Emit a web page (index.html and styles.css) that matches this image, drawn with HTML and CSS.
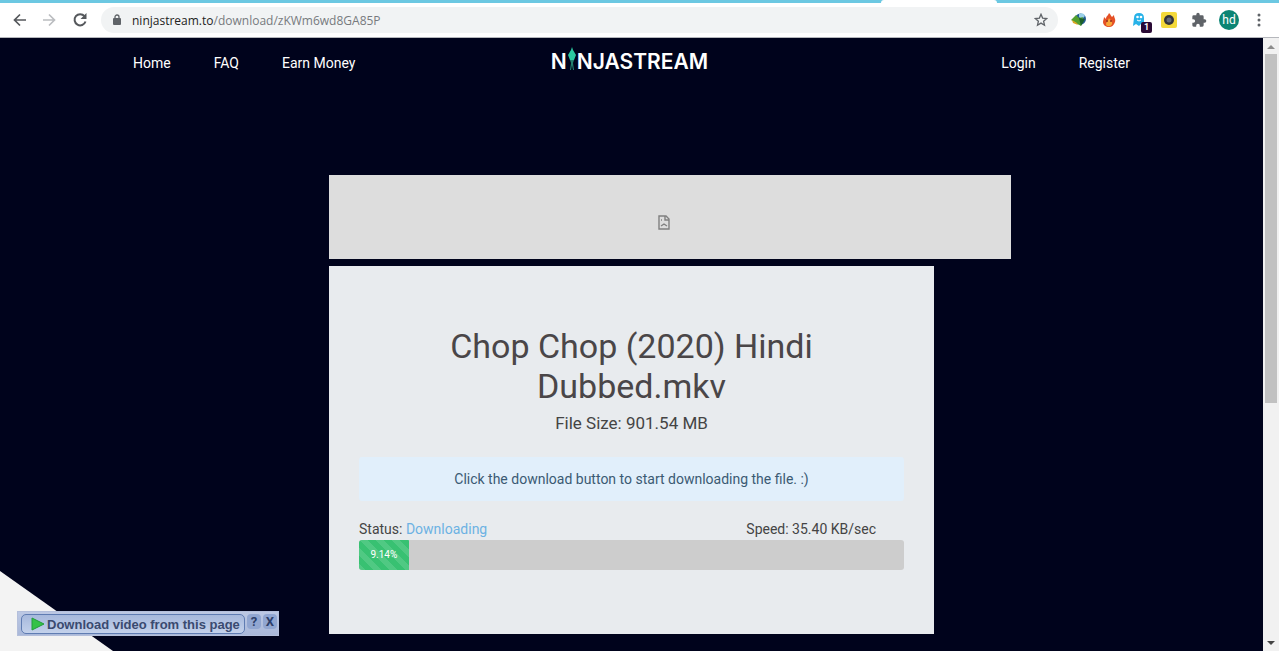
FILE: index.html
```html
<!DOCTYPE html>
<html lang="en">
<head>
  <meta charset="UTF-8">
  <meta name="viewport" content="width=device-width, initial-scale=1.0">
  <title>NinjaStream - Download</title>
  <link rel="stylesheet" href="styles.css">
</head>
<body>

<div class="tab-strip"><div class="active-tab"></div></div>

<div class="toolbar">
  <button class="tool" aria-label="Back">
    <svg width="16" height="16" viewBox="0 0 16 16" fill="none" stroke="#55585c" stroke-width="1.700"><path d="M14 8H3M8 2.500L2.500 8l5.500 5.500"/></svg>
  </button>
  <button class="tool" aria-label="Forward">
    <svg width="16" height="16" viewBox="0 0 16 16" fill="none" stroke="#bbbdc0" stroke-width="1.700"><path d="M1 8h11M7 2.500L12.500 8 7 13.500"/></svg>
  </button>
  <button class="tool" aria-label="Reload">
    <svg width="16" height="16" viewBox="0 0 16 16"><path d="M12.5 4.2A5.6 5.6 0 1 0 13.5 9.5" fill="none" stroke="#55585c" stroke-width="2"/><path d="M14.5 1v6h-6z" fill="#55585c"/></svg>
  </button>
  <div class="address-bar">
    <svg width="10" height="12" viewBox="0 0 10 12"><rect x="1" y="4" width="8" height="7" rx="1" fill="#5f6368"/><path d="M3 5V3a2 2 0 0 1 4 0v2" fill="none" stroke="#5f6368" stroke-width="1.3"/></svg>
    <div class="url" role="textbox" aria-label="Address"><span class="host">ninjastream.to</span>/download/zKWm6wd8GA85P</div>
    <button class="star" aria-label="Bookmark this page">
      <svg width="14" height="14" viewBox="0 0 14 14" fill="none" stroke="#5f6368" stroke-width="1.3"><path d="M7 1.3l1.6 3.8 4.1.4-3.1 2.7.9 4L7 10.1l-3.5 2.1.9-4L1.3 5.5l4.1-.4z"/></svg>
    </button>
  </div>
  <div class="extensions">
    <button class="ext" aria-label="Download manager">
      <svg width="16" height="16" viewBox="0 0 16 16"><circle cx="9.500" cy="7" r="5.500" fill="#245c94"/><path d="M8 2q5-2 6 2l-3 3-3-2z" fill="#9ad0e8"/><path d="M0 8l5-5 3 3 4-1-2 9-5-3z" fill="#52a02f"/><path d="M1 8l5 3 1 2-5-2z" fill="#d9a520"/><path d="M8 6l6 1-4 7z" fill="#1c602a"/></svg>
    </button>
    <button class="ext" aria-label="Flame">
      <svg width="16" height="16" viewBox="0 0 16 16"><path d="M8 1c2 2 2 3 3 4l2-2c0 3 2 4 1 7-1 3-3 5-6 5s-6-2-6-5c0-2 1-3 1-5l2 2c0-3 2-3 3-6z" fill="#e45025"/><path d="M8 6c1 2 4 3 3 6-1 3-6 3-6 0 0-2 2-3 3-6z" fill="#f6a638"/><circle cx="6" cy="9" r="1" fill="#96301b"/><circle cx="10" cy="9" r="1" fill="#96301b"/></svg>
    </button>
    <button class="ext" aria-label="Ghost blocker, 1 blocked">
      <svg width="16" height="16" viewBox="0 0 16 16"><path d="M2 14l1-8q0-5 5-5t5 5v7l-3-1-2 2-3-2z" fill="#27b2e8"/><circle cx="6.500" cy="5" r="1.300" fill="#fff"/><circle cx="10" cy="5" r="1.300" fill="#fff"/><path d="M6 8q2 2 4 0" stroke="#fff" fill="none"/></svg>
      <span class="badge">1</span>
    </button>
    <button class="ext" aria-label="Camera">
      <svg width="16" height="16" viewBox="0 0 16 16"><rect x="0" y="0" width="16" height="16" rx="2" fill="#f4d93a"/><circle cx="8" cy="8" r="5" fill="#34343c"/><circle cx="8" cy="8" r="2.500" fill="#626979"/></svg>
    </button>
    <button class="ext" aria-label="Extensions">
      <svg width="16" height="16" viewBox="0 0 24 24"><path d="M20.500 11H19V7a2 2 0 0 0-2-2h-4V3.500a2.500 2.500 0 0 0-5 0V5H4a2 2 0 0 0-2 2v3.800h1.500a2.700 2.700 0 0 1 0 5.400H2V20a2 2 0 0 0 2 2h3.800v-1.500a2.700 2.700 0 0 1 5.400 0V22H17a2 2 0 0 0 2-2v-4h1.500a2.500 2.500 0 0 0 0-5z" fill="#5f6368"/></svg>
    </button>
    <button class="ext avatar">hd</button>
    <button class="ext" aria-label="Menu">
      <svg width="16" height="16" viewBox="0 0 16 16" fill="#5f6368"><circle cx="8" cy="3" r="1.500"/><circle cx="8" cy="8" r="1.500"/><circle cx="8" cy="13" r="1.500"/></svg>
    </button>
  </div>
</div>

<div class="window">
  <div class="site">
    <header class="navbar">
      <nav class="links">
        <a href="#">Home</a>
        <a href="#">FAQ</a>
        <a href="#">Earn Money</a>
      </nav>
      <a class="logo" href="#" aria-label="NinjaStream">
        <span>N</span>
        <svg width="8" height="24" viewBox="0 0 8 24"><path d="M4 0l1 3 3 5-2 5H2L0 8l3-5z" fill="#2bc9a0"/><path d="M2 13h4l-1 3 1 7H5l-1-5-1 5H2l1-7z" fill="#23806f"/></svg>
        <span>NJASTREAM</span>
      </a>
      <nav class="links right">
        <a href="#">Login</a>
        <a href="#">Register</a>
      </nav>
    </header>

    <main class="content">
      <div class="ad">
        <svg width="12" height="15" viewBox="0 0 12 15" fill="none" stroke="#808080" stroke-width="1.400"><path d="M1 1h7l3 3v10H1z"/><path d="M7 1v4h4M3 11l3-2 3 2"/><path d="M3 5h1"/></svg>
      </div>
      <div class="card">
        <h1>Chop Chop (2020) Hindi Dubbed.mkv</h1>
        <p class="size">File Size: 901.54 MB</p>
        <div class="alert">Click the download button to start downloading the file. :)</div>
        <div class="status">
          <span>Status: <span class="state">Downloading</span></span>
          <span class="speed">Speed: 35.40 KB/sec</span>
        </div>
        <div class="progress" role="progressbar" aria-label="Download progress" aria-valuenow="9.14" aria-valuemin="0" aria-valuemax="100">
          <div class="bar" style="width: 9.14%">9.14%</div>
        </div>
      </div>
    </main>

    <div class="grabber">
      <button class="grab">
        <svg width="14" height="14" viewBox="0 0 14 14"><path d="M1 1l12 6-12 6z" fill="#35c247" stroke="#229c3c"/></svg>
        Download video from this page
      </button>
      <button class="mini">?</button>
      <button class="mini">X</button>
    </div>
  </div>

  <div class="scrollbar">
    <svg width="8" height="5" viewBox="0 0 8 5"><path d="M0 5l4-4 4 4z" fill="#8c8c8c"/></svg>
    <div class="track"><div class="thumb"></div></div>
    <svg width="8" height="5" viewBox="0 0 8 5"><path d="M0 0l4 4 4-4z" fill="#444"/></svg>
  </div>
</div>

</body>
</html>
```
FILE: styles.css
```css
* {
  box-sizing: border-box;
}
body {
  margin: 0;
  height: 100vh;
  display: flex;
  flex-direction: column;
  overflow: hidden;
  font-family: Roboto, Arial, sans-serif;
  font-size: 14px;
}
button {
  padding: 0;
  border: 0;
  background: none;
  font-family: inherit;
}
a {
  color: #fff;
  text-decoration: none;
}
svg {
  display: block;
  flex: none;
}

/* browser bar */
.tab-strip {
  height: 3px;
  flex: none;
  background-color: #6cc8e2;
}
.active-tab {
  width: 116px;
  height: 3px;
  margin-left: auto;
  margin-right: 282px;
  background-color: #fff;
  border-radius: 3px 3px 0 0;
}
.toolbar {
  display: flex;
  align-items: center;
  flex: none;
  height: 35px;
  padding: 0 12px;
  background-color: #fff;
  border-bottom: 1px solid #b5b7bc;
}
.tool {
  margin-right: 14px;
}
.tool:nth-child(3) {
  margin-right: 13px;
}
.address-bar {
  display: flex;
  align-items: center;
  flex: 1;
  height: 26px;
  padding: 0 10px 0 11px;
  border-radius: 13px;
  background-color: #f1f3f4;
}
.url {
  flex: 1;
  margin-left: 10px;
  color: #777a7e;
  font-family: "Open Sans", sans-serif;
  font-size: 12px;
}
.host {
  color: #222;
}
.extensions {
  display: flex;
  align-items: center;
  gap: 14px;
  margin-left: 13px;
}
.ext {
  position: relative;
}
.badge {
  position: absolute;
  right: -5px;
  bottom: -5px;
  width: 11px;
  height: 11px;
  border-radius: 2px;
  background-color: #2a0a35;
  color: #fff;
  font-size: 9px;
  font-weight: bold;
  line-height: 11px;
}
.avatar {
  width: 20px;
  height: 20px;
  margin: 0 -2px;
  border-radius: 50%;
  background-color: #0b8574;
  color: #fff;
  font-size: 12px;
}

/* page */
.window {
  display: flex;
  flex: 1;
  min-height: 0;
}
.site {
  position: relative;
  flex: 1;
  overflow: hidden;
  background-color: #00031c;
}
.site::before {
  content: "";
  position: absolute;
  left: 0;
  bottom: 0;
  width: 113px;
  height: 80px;
  background-color: #f3f3f3;
  clip-path: polygon(0 0, 100% 100%, 0 100%);
}
.navbar {
  display: grid;
  grid-template-columns: 1fr auto 1fr;
  align-items: center;
  max-width: 997px;
  height: 50px;
  margin: 0 auto;
}
.links {
  display: flex;
  gap: 43px;
}
.right {
  justify-content: flex-end;
}
.logo {
  display: flex;
  align-items: center;
  gap: 1px;
  padding: 0 4px 3px 0;
  font-family: Inter, Roboto, sans-serif;
  font-size: 21px;
  font-weight: 600;
  line-height: 24px;
}
.logo svg {
  margin-bottom: 5px;
}
.content {
  width: 605px;
  margin: 87px auto 0;
}
.ad {
  display: flex;
  align-items: center;
  justify-content: center;
  width: 682px;
  height: 84px;
  padding: 10px 12px 0 0;
  margin-bottom: 7px;
  background-color: #ddd;
}
.card {
  padding: 60px 30px 64px;
  background-color: #e8ebee;
  color: #444;
  text-align: center;
}
h1 {
  margin: 0 60px;
  color: #4a4648;
  font-size: 34px;
  font-weight: normal;
  line-height: 40px;
}
.size {
  margin: 6px 0 23px;
  font-size: 17px;
  line-height: 22px;
}
.alert {
  padding: 12px;
  border-radius: 3px;
  background-color: #e1effb;
  color: #3b5a73;
  line-height: 20px;
}
.status {
  display: flex;
  justify-content: space-between;
  margin-top: 18px;
  padding-right: 28px;
  line-height: 20px;
}
.state {
  color: #6cb2e3;
}
.progress {
  height: 30px;
  margin-top: 1px;
  border-radius: 3px;
  background-color: #cdcdcd;
  overflow: hidden;
}
.bar {
  height: 30px;
  background-color: #38c172;
  background-image: linear-gradient(45deg, rgba(255, 255, 255, 0.12) 25%, transparent 25%, transparent 50%, rgba(255, 255, 255, 0.12) 50%, rgba(255, 255, 255, 0.12) 75%, transparent 75%);
  background-size: 16px 16px;
  color: #fff;
  font-size: 10px;
  line-height: 29px;
}

/* floating download panel */
.grabber {
  position: absolute;
  left: 17px;
  bottom: 15px;
  display: flex;
  align-items: flex-start;
  gap: 2px;
  width: 262px;
  height: 25px;
  padding: 2px 1px 2px 3px;
  border: 1px solid #b4bfdb;
  background: linear-gradient(#bcc8e4, #a9b8d9);
}
.grab {
  display: flex;
  align-items: center;
  flex: 1;
  gap: 2px;
  height: 20px;
  padding: 0 0 0 9px;
  border: 1px solid #5f7cb2;
  border-radius: 5px;
  background: linear-gradient(#a6b8dc, #c3d1eb);
  color: #3a4a70;
  font-family: "Liberation Sans", Arial, sans-serif;
  font-size: 13px;
  font-weight: bold;
  white-space: nowrap;
}
.mini {
  width: 14px;
  height: 15px;
  border-radius: 4px;
  background-color: #91a6d1;
  color: #2d3f6b;
  font-size: 13px;
  font-weight: bold;
  line-height: 15px;
}

/* scrollbar */
.scrollbar {
  display: flex;
  flex-direction: column;
  align-items: center;
  width: 16px;
  padding: 6px 0 5px;
  background-color: #f1f1f1;
}
.track {
  flex: 1;
  width: 12px;
  margin: 5px 0;
}
.thumb {
  height: 60%;
  background-color: #c1c1c1;
}
```
